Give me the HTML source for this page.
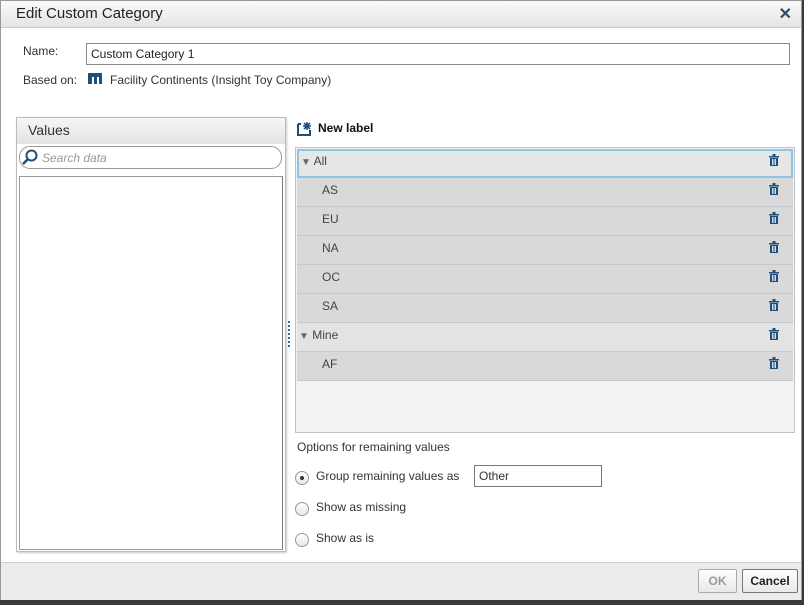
<!DOCTYPE html><html><head><style>
*{box-sizing:border-box;margin:0;padding:0}
body{width:804px;height:605px;position:relative;background:#3a3a3a;font-family:"Liberation Sans",sans-serif;font-size:12px;color:#333;overflow:hidden}
.dlg{position:absolute;left:0;top:0;width:802px;height:600px;background:#fff;border:1px solid #999}
.title{position:absolute;left:0;top:0;width:100%;height:27px;background:linear-gradient(#fafafa,#e4e4e4);border-bottom:1px solid #c8c8c8;font-size:15px;padding:4px 15px;color:#222}
.x{position:absolute;right:9px;top:3px;font-size:16px;font-weight:bold;color:#2b4a70}
.abs{position:absolute}
.row{position:absolute;left:296px;width:496px;height:29px;background:#d9d9d9;border-bottom:1px solid #c4c7cc;padding:5px 0 0 25px;color:#444}
.trash{position:absolute;right:14px;top:5px;width:10px;height:12px}
.radio{position:absolute;left:294px;width:14px;height:14px;border:1px solid #999;border-radius:50%;background:linear-gradient(#fff,#e8e8e8)}
.btn{position:absolute;top:568px;height:24px;border:1px solid #aaa;border-radius:2px;background:linear-gradient(#fff,#e9e9e9);font-weight:bold;padding:4px 0;text-align:center}
</style></head><body>
<div class="dlg">
<div class="title">Edit Custom Category<span class="x">✕</span></div>
<div class="abs" style="left:22px;top:43px">Name:</div>
<div class="abs" style="left:85px;top:42px;width:704px;height:22px;border:1px solid #8a8a8a;padding:3px 4px;color:#222">Custom Category 1</div>
<div class="abs" style="left:22px;top:72px">Based on:</div>
<svg class="abs" style="left:87px;top:72px" width="14" height="11"><path d="M0 0h14v11h-3V4H9v7H6V4H4v7H0z" fill="#1f4e79"/></svg>
<div class="abs" style="left:109px;top:72px;color:#333">Facility Continents (Insight Toy Company)</div>

<div class="abs" style="left:15px;top:116px;width:270px;height:435px;border:1px solid #bbb;box-shadow:1px 1px 2px #ccc"></div>
<div class="abs" style="left:16px;top:117px;width:268px;height:26px;background:linear-gradient(#f6f6f6,#e3e3e3);font-size:14px;padding:4px 11px;color:#333">Values</div>
<div class="abs" style="left:18px;top:145px;width:263px;height:23px;border:1px solid #999;border-radius:11px;padding:4px 22px;font-style:italic;color:#999">Search data</div>
<svg class="abs" style="left:21px;top:148px" width="16" height="16"><circle cx="9.5" cy="6.5" r="5" fill="#fff" stroke="#1f4e79" stroke-width="2"/><path d="M6 10L1 15" stroke="#1f4e79" stroke-width="2.5"/></svg>
<div class="abs" style="left:18px;top:175px;width:264px;height:374px;border:1px solid #999;border-right-color:#777"></div>
<div class="abs" style="left:287px;top:320px;width:2px;height:26px;background:repeating-linear-gradient(#3b6aa0 0 2px,transparent 2px 4px)"></div>

<svg class="abs" style="left:296px;top:121px" width="15" height="14"><path d="M1 2v11h12V8" fill="none" stroke="#1f4e79" stroke-width="2"/><path d="M1 2h3" stroke="#1f4e79" stroke-width="2"/><path d="M10 0v8M6 4h8M7 1l6 6M13 1l-6 6" stroke="#1f4e79" stroke-width="1.6"/></svg>
<div class="abs" style="left:317px;top:120px;font-weight:bold;color:#111">New label</div>

<div class="abs" style="left:294px;top:146px;width:500px;height:286px;border:1px solid #bcc3cb;background:#f2f2f2"></div>
<div class="row" style="top:148px;background:#e6e6e6;border:2px solid #8ec5e6;padding:3px 0 0 2px"><span style="color:#666;font-size:10px">▼</span> All<svg class="trash" style="top:3px;right:12px" viewBox="0 0 10 12"><path d="M0 2h10v1.5H0zM3.5 0h3v2h-3zM1 4h8v8H1z" fill="#1f4e79"/><path d="M3.5 5v6M5 5v6M6.5 5v6" stroke="#fff" stroke-width=".8"/></svg></div>
<div class="row" style="top:177px">AS<svg class="trash" viewBox="0 0 10 12"><path d="M0 2h10v1.5H0zM3.5 0h3v2h-3zM1 4h8v8H1z" fill="#1f4e79"/><path d="M3.5 5v6M5 5v6M6.5 5v6" stroke="#fff" stroke-width=".8"/></svg></div>
<div class="row" style="top:206px">EU<svg class="trash" viewBox="0 0 10 12"><path d="M0 2h10v1.5H0zM3.5 0h3v2h-3zM1 4h8v8H1z" fill="#1f4e79"/><path d="M3.5 5v6M5 5v6M6.5 5v6" stroke="#fff" stroke-width=".8"/></svg></div>
<div class="row" style="top:235px">NA<svg class="trash" viewBox="0 0 10 12"><path d="M0 2h10v1.5H0zM3.5 0h3v2h-3zM1 4h8v8H1z" fill="#1f4e79"/><path d="M3.5 5v6M5 5v6M6.5 5v6" stroke="#fff" stroke-width=".8"/></svg></div>
<div class="row" style="top:264px">OC<svg class="trash" viewBox="0 0 10 12"><path d="M0 2h10v1.5H0zM3.5 0h3v2h-3zM1 4h8v8H1z" fill="#1f4e79"/><path d="M3.5 5v6M5 5v6M6.5 5v6" stroke="#fff" stroke-width=".8"/></svg></div>
<div class="row" style="top:293px">SA<svg class="trash" viewBox="0 0 10 12"><path d="M0 2h10v1.5H0zM3.5 0h3v2h-3zM1 4h8v8H1z" fill="#1f4e79"/><path d="M3.5 5v6M5 5v6M6.5 5v6" stroke="#fff" stroke-width=".8"/></svg></div>
<div class="row" style="top:322px;background:#e3e3e3;padding-left:2px"><span style="color:#666;font-size:10px">▼</span> Mine<svg class="trash" viewBox="0 0 10 12"><path d="M0 2h10v1.5H0zM3.5 0h3v2h-3zM1 4h8v8H1z" fill="#1f4e79"/><path d="M3.5 5v6M5 5v6M6.5 5v6" stroke="#fff" stroke-width=".8"/></svg></div>
<div class="row" style="top:351px">AF<svg class="trash" viewBox="0 0 10 12"><path d="M0 2h10v1.5H0zM3.5 0h3v2h-3zM1 4h8v8H1z" fill="#1f4e79"/><path d="M3.5 5v6M5 5v6M6.5 5v6" stroke="#fff" stroke-width=".8"/></svg></div>

<div class="abs" style="left:296px;top:439px">Options for remaining values</div>
<div class="radio" style="top:470px"><div style="width:4px;height:4px;background:#333;border-radius:50%;margin:4px"></div></div>
<div class="abs" style="left:315px;top:468px">Group remaining values as</div>
<div class="abs" style="left:473px;top:464px;width:128px;height:22px;border:1px solid #777;padding:3px 4px">Other</div>
<div class="radio" style="top:501px"></div>
<div class="abs" style="left:315px;top:499px">Show as missing</div>
<div class="radio" style="top:532px"></div>
<div class="abs" style="left:315px;top:530px">Show as is</div>

<div class="abs" style="left:0;top:561px;width:800px;height:38px;background:#ececec;border-top:1px solid #d0d0d0"></div>
<div class="btn" style="left:697px;width:39px;color:#999">OK</div>
<div class="btn" style="left:741px;width:56px;border-color:#777;color:#222">Cancel</div>
</div>
</body></html>
